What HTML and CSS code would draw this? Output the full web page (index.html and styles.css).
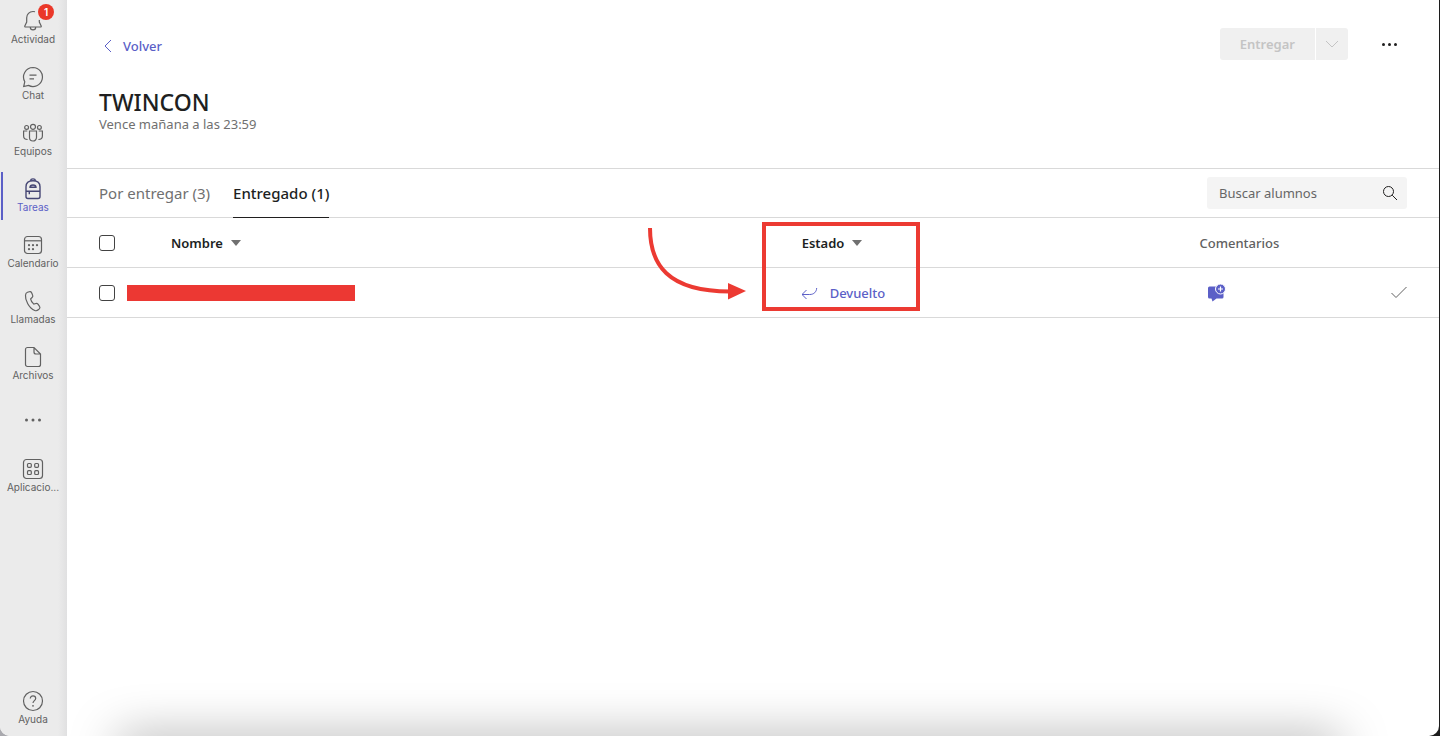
FILE: index.html
```html
<!DOCTYPE html>
<html lang="es">
<head>
    <meta charset="UTF-8">
    <meta name="viewport" content="width=device-width, initial-scale=1.0">
    <title>Tareas</title>
    <link rel="stylesheet" href="styles.css">
</head>
<body>
    <div class="window">
        <nav class="sidebar">
            <a class="nav-item" href="#">
                <svg width="22" height="22" viewBox="0 0 22 22"><path d="M13 1.800C12.400 1.600 11.700 1.500 11 1.500c-3.700 0-6.300 2.800-6.300 6.300v4.200l-1.900 4.100c-.2.500.1.900.6.900h15.200c.5 0 .8-.4.6-.9l-1.900-4.100V10M8.300 17.200a2.700 2.700 0 0 0 5.400 0"/></svg>
                <span>Actividad</span>
                <span class="badge">1</span>
            </a>
            <a class="nav-item" href="#">
                <svg width="22" height="22" viewBox="0 0 22 22"><path d="M11 1.500a9.500 9.500 0 1 1-4.500 17.900L1.700 20.500l1.100-4.800A9.500 9.500 0 0 1 11 1.500zM7.500 9.200h7M7.500 12.800h4.500"/></svg>
                <span>Chat</span>
            </a>
            <a class="nav-item" href="#">
                <svg width="22" height="22" viewBox="0 0 22 22"><circle cx="11" cy="4.800" r="2.500"/><circle cx="4.600" cy="5.400" r="1.900"/><circle cx="17.400" cy="5.400" r="1.900"/><path d="M7.500 9h7v6.500a3.500 3.500 0 0 1-7 0zM5.300 9H1.600v5c0 2.400 1.600 3.500 4 3.500M16.700 9h3.700v5c0 2.400-1.600 3.500-4 3.500"/></svg>
                <span>Equipos</span>
            </a>
            <a class="nav-item active" href="#">
                <svg width="22" height="22" viewBox="0 0 22 22"><path d="M4 8.800C4 5 6.800 2.700 11 2.700S18 5 18 8.800v9.700c0 1.200-.8 2-2 2H6c-1.200 0-2-.8-2-2zM8.800 3V2.300c0-1.900 4.400-1.900 4.400 0V3M4 13.300h14M7.300 13.300v3"/><path d="M8 9.300c0-3 6-3 6 0z"/></svg>
                <span>Tareas</span>
            </a>
            <a class="nav-item" href="#">
                <svg width="22" height="22" viewBox="0 0 22 22"><rect x="2.500" y="2.500" width="17" height="17" rx="3"/><path d="M2.500 6.800h17"/><g class="dots"><circle cx="7" cy="11.200" r="1.100"/><circle cx="11" cy="11.200" r="1.100"/><circle cx="15" cy="11.200" r="1.100"/><circle cx="7" cy="15.200" r="1.100"/><circle cx="11" cy="15.200" r="1.100"/></g></svg>
                <span>Calendario</span>
            </a>
            <a class="nav-item" href="#">
                <svg width="22" height="22" viewBox="0 0 22 22"><path d="M5.500 2.300l1.800-.6c1-.3 1.900.1 2.300 1l1 2.400c.4.900.2 1.800-.5 2.400L8.600 8.900c.3 1.800 1.700 4 3.200 5.200l2.100-.6c.8-.2 1.600.1 2.100.7l1.500 2.200c.6.800.5 1.800-.2 2.500l-1 .9c-1 .9-2.300 1.200-3.500.7C6.900 18.100 3 9.800 3.500 5.200c.1-1.400.8-2.500 2-2.900z"/></svg>
                <span>Llamadas</span>
            </a>
            <a class="nav-item" href="#">
                <svg width="22" height="22" viewBox="0 0 22 22"><path d="M5.500 1.500H12L18.500 8v10.500c0 1.200-.8 2-2 2h-11c-1.200 0-2-.8-2-2v-15c0-1.200.8-2 2-2zM12 1.500V6c0 1.200.8 2 2 2h4.500"/></svg>
                <span>Archivos</span>
            </a>
            <button class="nav-item nav-more" type="button" aria-label="Más">
                <svg width="22" height="22" viewBox="0 0 22 22"><g class="dots"><circle cx="4.500" cy="11" r="1.500"/><circle cx="11" cy="11" r="1.500"/><circle cx="17.500" cy="11" r="1.500"/></g></svg>
            </button>
            <a class="nav-item" href="#">
                <svg width="22" height="22" viewBox="0 0 22 22"><rect x="1.500" y="1.500" width="19" height="19" rx="3"/><rect x="5.500" y="5.500" width="3.800" height="3.800" rx="1"/><rect x="12.700" y="5.500" width="3.800" height="3.800" rx="1"/><rect x="5.500" y="12.700" width="3.800" height="3.800" rx="1"/><rect x="12.700" y="12.700" width="3.800" height="3.800" rx="1"/></svg>
                <span>Aplicacio...</span>
            </a>
            <a class="nav-item nav-help" href="#">
                <svg width="22" height="22" viewBox="0 0 22 22"><circle cx="11" cy="11" r="9.500"/><path d="M8.300 8.600c0-1.700 1.100-2.700 2.700-2.700s2.700 1 2.700 2.500c0 2-2.700 2.400-2.700 4.600"/><g class="dots"><circle cx="11" cy="15.800" r=".9"/></g></svg>
                <span>Ayuda</span>
            </a>
        </nav>

        <main class="content">
            <header class="page-header">
                <div class="toolbar">
                    <a class="back" href="#">
                        <svg width="16" height="16" viewBox="0 0 16 16"><path d="M12 2L6 8l6 6"/></svg>
                        Volver
                    </a>
                    <div class="actions">
                        <div class="split-button">
                            <button type="button" disabled>Entregar</button>
                            <button type="button" disabled aria-label="Opciones de entrega">
                                <svg width="16" height="16" viewBox="0 0 16 16"><path d="M2 5l6 6 6-6"/></svg>
                            </button>
                        </div>
                        <button class="more" type="button" aria-label="Más opciones">
                            <svg width="16" height="16" viewBox="0 0 16 16"><circle cx="2.500" cy="8.500" r="1.500"/><circle cx="8.500" cy="8.500" r="1.500"/><circle cx="14.500" cy="8.500" r="1.500"/></svg>
                        </button>
                    </div>
                </div>
                <h1>TWINCON</h1>
                <p class="due">Vence mañana a las 23:59</p>
            </header>

            <div class="tab-bar">
                <div class="tabs">
                    <button class="tab" type="button">Por entregar (3)</button>
                    <button class="tab selected" type="button">Entregado (1)</button>
                </div>
                <div class="search">
                    <input type="text" placeholder="Buscar alumnos" aria-label="Buscar alumnos">
                    <svg width="16" height="16" viewBox="0 0 16 16"><circle cx="6.500" cy="6.500" r="5"/><path d="M10.200 10.200l4.800 4.800"/></svg>
                </div>
            </div>

            <table class="students">
                <thead>
                    <tr>
                        <th class="col-check"><input type="checkbox" aria-label="Seleccionar todo"></th>
                        <th class="col-name"><button class="sort" type="button">Nombre</button></th>
                        <th class="col-status"><button class="sort" type="button">Estado</button><div class="highlight"></div></th>
                        <th class="col-comments">Comentarios</th>
                        <th class="col-done"></th>
                    </tr>
                </thead>
                <tbody>
                    <tr>
                        <td class="col-check"><input type="checkbox" aria-label="Seleccionar alumno"></td>
                        <td><div class="redacted"></div></td>
                        <td class="col-status">
                            <a class="status" href="#">
                                <svg width="16" height="16" viewBox="0 0 16 16"><path d="M14.700 3c-.2 3.800-2.700 6.500-7 6.500H0M4.500 5L0 9.500 4.500 14"/></svg>
                                Devuelto
                            </a>
                            <svg class="arrow" width="100" height="76" viewBox="0 0 100 76"><path d="M3 2c0 36 17 63.500 80 63.500"/><polygon points="81,57 99,65 81,73.500"/></svg>
                        </td>
                        <td class="col-comments">
                            <button class="comment" type="button" aria-label="Agregar comentario">
                                <svg width="20" height="20" viewBox="0 0 20 20"><path d="M3.500 3.500h14v10.500a1.500 1.500 0 0 1-1.500 1.500h-5.500L6.500 18.500l-1-3h-2A1.500 1.500 0 0 1 2 14V5a1.500 1.500 0 0 1 1.500-1.500z"/><circle class="plus-bg" cx="14.500" cy="6" r="5"/><path class="plus" d="M14.500 3.500v5M12 6h5"/></svg>
                            </button>
                        </td>
                        <td class="col-done"><svg width="18" height="18" viewBox="0 0 18 18"><path d="M2.500 9l4.500 4.500L17.500 3"/></svg></td>
                    </tr>
                </tbody>
            </table>
            <div class="bottom-shade"></div>
        </main>
    </div>
</body>
</html>
```
FILE: styles.css
```css
* {
    box-sizing: border-box;
}

body {
    margin: 0;
    background: linear-gradient(to right, #a9a9ae 50%, #1c1c1c 50%);
    color: #201f1f;
    font-family: 'Noto Sans', 'Open Sans', sans-serif;
    font-size: 13px;
    line-height: 16px;
}

a {
    color: #5b5fc7;
    text-decoration: none;
}

button {
    padding: 0;
    border: none;
    background: none;
    color: inherit;
    font: inherit;
    cursor: pointer;
}

svg {
    display: block;
    flex-shrink: 0;
    fill: none;
    stroke: currentColor;
}

.window {
    display: flex;
    min-height: 100vh;
    margin-right: 1px;
    border-radius: 0 0 10px 10px;
    background: #fff;
    overflow: hidden;
}

/* Sidebar */
.sidebar {
    display: flex;
    flex-direction: column;
    flex-shrink: 0;
    gap: 8px;
    width: 67px;
    padding: 4px 1px;
    background: linear-gradient(to right, #ebebeb 58px, #e0e0e1);
}

.nav-item {
    position: relative;
    display: flex;
    flex-direction: column;
    align-items: center;
    height: 48px;
    padding: 6px 1px 0 0;
    color: #616161;
    font-family: Inter, sans-serif;
    font-size: 10px;
    line-height: 14px;
}

.nav-item svg {
    stroke-width: 1.2;
}

.nav-item.active {
    padding-right: 3px;
    border-left: 2px solid #5b5fc7;
    color: #5b5fc7;
}

.nav-item.active svg {
    color: #464775;
    stroke-width: 1.4;
}

.dots {
    fill: currentColor;
    stroke: none;
}

.nav-more {
    padding-top: 13px;
}

.nav-help {
    margin-top: auto;
}

.badge {
    position: absolute;
    top: 0;
    left: 37px;
    width: 16px;
    height: 16px;
    border-radius: 50%;
    background: #ea3829;
    color: #fff;
    font-weight: 600;
    line-height: 16px;
    text-align: center;
}

/* Header */
.content {
    position: relative;
    flex: 1;
    min-width: 0;
}

.page-header {
    padding: 28px 32px 36px;
    border-bottom: 1px solid #d9d9d9;
}

.toolbar,
.actions,
.back,
.status {
    display: flex;
    align-items: center;
}

.toolbar {
    justify-content: space-between;
    height: 32px;
    margin-bottom: 28px;
}

.back {
    gap: 8px;
    padding-top: 4px;
    font-weight: 500;
}

.actions {
    gap: 23px;
}

.split-button {
    display: flex;
    gap: 1px;
    border-radius: 3px;
    overflow: hidden;
}

.split-button button {
    height: 32px;
    padding: 0 20px;
    background: #f0f0f0;
    color: #c4c4c4;
    font-weight: 600;
}

.split-button button + button {
    padding: 0 8px;
}

.more {
    padding: 10px;
}

.more svg {
    fill: currentColor;
    stroke: none;
}

h1 {
    margin: 0;
    font-size: 23px;
    font-weight: 500;
    line-height: 28px;
}

.due {
    margin: 0;
    color: #707070;
}

/* Tabs */
.tab-bar {
    display: flex;
    align-items: center;
    justify-content: space-between;
    height: 49px;
    padding: 0 32px;
    border-bottom: 1px solid #d9d9d9;
}

.tabs {
    display: flex;
    gap: 23px;
}

.tab {
    height: 49px;
    border-bottom: 1px solid transparent;
    color: #707070;
    font-size: 15px;
}

.tab.selected {
    border-color: #201f1f;
    color: #201f1f;
    font-weight: 500;
}

.search {
    display: flex;
    align-items: center;
    width: 200px;
    height: 32px;
    padding: 0 9px 0 12px;
    border-radius: 3px;
    background: #f4f4f4;
}

.search input {
    flex: 1;
    min-width: 0;
    padding: 0;
    border: none;
    outline: none;
    background: none;
    font: inherit;
}

.search input::placeholder {
    color: #666;
}

/* Table */
.students {
    width: 100%;
    border-spacing: 0;
    table-layout: fixed;
}

th,
td {
    height: 50px;
    padding: 0;
    border-bottom: 1px solid #d9d9d9;
    text-align: left;
}

.students .col-check {
    width: 60px;
    padding-left: 32px;
}

input[type="checkbox"] {
    display: block;
    appearance: none;
    width: 16px;
    height: 16px;
    margin: 0;
    border: 1px solid #424242;
    border-radius: 3px;
}

th.col-name {
    padding-left: 44px;
}

.col-status {
    position: relative;
    width: 29%;
}

.col-comments {
    width: 12.5%;
    color: #616161;
    font-weight: 500;
}

.col-done {
    width: 68px;
    color: #616161;
}

.students .col-done {
    padding-right: 32px;
}

.col-done svg {
    margin-left: auto;
}

.sort {
    display: flex;
    align-items: center;
    gap: 8px;
    font-weight: 600;
}

.sort::after {
    content: "";
    border: 5px solid transparent;
    border-top: 6px solid #707070;
    border-bottom: none;
}

.redacted {
    width: 228px;
    height: 16px;
    background: #ec3833;
}

.status {
    gap: 12px;
    font-weight: 500;
}

.comment {
    display: block;
    padding-left: 6px;
    color: #5b5fc7;
}

.comment svg {
    fill: currentColor;
    stroke: none;
}

.comment .plus-bg {
    stroke: #fff;
}

.comment .plus {
    stroke: #fff;
    stroke-width: 1.2;
}

/* Callout over the status column */
.highlight {
    position: absolute;
    top: 4px;
    left: -40px;
    width: 158px;
    height: 89px;
    border: 4px solid #ec3a32;
}

.arrow {
    position: absolute;
    bottom: 15px;
    left: -155px;
    color: #ec3a32;
    stroke-width: 4;
}

.arrow polygon {
    fill: currentColor;
    stroke: none;
}

.bottom-shade {
    position: absolute;
    right: 100px;
    bottom: -24px;
    left: 52px;
    height: 20px;
    border-radius: 20px;
    box-shadow: 0 0 48px 4px rgba(0, 0, 0, 0.35);
}
```
